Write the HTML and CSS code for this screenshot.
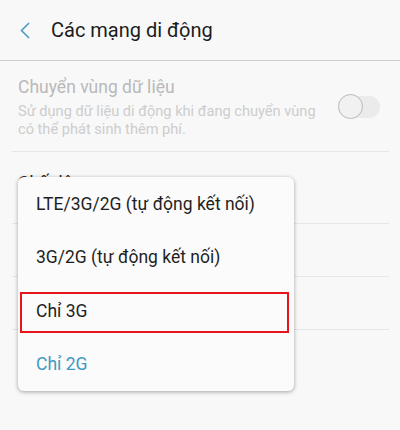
FILE: index.html
```html
<!DOCTYPE html>
<html lang="vi">
<head>
    <meta charset="UTF-8">
    <title>Các mạng di động</title>
    <link rel="stylesheet" href="styles.css">
</head>
<body>

<header class="topbar">
    <svg class="back" width="10" height="17" viewBox="0 0 10 17">
        <path d="M9 1 L1.5 8.5 L9 16" fill="none" stroke="#4a9cc4" stroke-width="1.6"/>
    </svg>
    <h1>Các mạng di động</h1>
</header>

<div class="list">
    <div class="row disabled">
        <div class="row-text">
            <div class="row-title">Chuyển vùng dữ liệu</div>
            <div class="row-sub">Sử dụng dữ liệu di động khi đang chuyển vùng có thể phát sinh thêm phí.</div>
        </div>
        <div class="switch"><span class="thumb"></span></div>
    </div>
    <div class="row tall">
        <div class="row-title">Chế độ mạng</div>
    </div>
    <div class="row short"></div>
    <div class="row short"></div>

    <div class="popup">
        <div class="option">LTE/3G/2G (tự động kết nối)</div>
        <div class="option">3G/2G (tự động kết nối)</div>
        <div class="option marked">Chỉ 3G</div>
        <div class="option active">Chỉ 2G</div>
    </div>
</div>

</body>
</html>
```

FILE: styles.css
```css
html, body {
    min-height: 430px;
}
body {
    margin: 0;
    background: #f8f8f8;
    font-family: Roboto, "Noto Sans", sans-serif;
    color: #222;
}
.topbar {
    height: 61px;
    display: flex;
    align-items: center;
    border-bottom: 1px solid #cfcfcf;
    box-sizing: border-box;
    padding-left: 20px;
}
.topbar .back {
    margin-right: 21px;
}
.topbar h1 {
    margin: 0;
    font-size: 20px;
    font-weight: 400;
    color: #1c1c1c;
}
.list {
    position: relative;
    min-height: 369px;
    padding: 0 11px 0 12px;
}
.row {
    display: flex;
    align-items: center;
    border-bottom: 1px solid #e6e6e6;
    padding: 14px 0 13px 6px;
}
.row-text {
    flex: 1;
}
.row-title {
    font-size: 17.5px;
    line-height: 24px;
}
.row-sub {
    font-size: 14.6px;
    line-height: 18px;
    margin-top: 3px;
    padding-right: 16px;
}
.disabled .row-title {
    color: #b9b9b9;
}
.disabled .row-sub {
    color: #cdcdcd;
}
.row.tall {
    display: block;
    height: 72px;
    padding: 19px 0 0 6px;
    box-sizing: border-box;
}
.row.short {
    height: 52px;
    padding: 0;
}
.switch {
    position: relative;
    width: 42px;
    height: 22px;
    border-radius: 11px;
    background: #ebebeb;
    margin-right: 9px;
}
.switch .thumb {
    position: absolute;
    left: 0;
    top: -2px;
    width: 23px;
    height: 23px;
    border-radius: 50%;
    background: #f1f1f1;
    border: 1px solid #b9b9b9;
}
.popup {
    position: absolute;
    left: 18px;
    top: 116px;
    width: 276px;
    background: #fbfbfb;
    border-radius: 6px;
    box-shadow: 0 1px 4px rgba(0, 0, 0, 0.35);
}
.option {
    position: relative;
    height: 53.5px;
    display: flex;
    align-items: center;
    padding-left: 18px;
    font-size: 17.5px;
    color: #1f1f1f;
}
.option.active {
    color: #3d9ac2;
}
.option.marked::after {
    content: "";
    position: absolute;
    left: 2px;
    right: 5px;
    top: 8px;
    bottom: 5px;
    border: 2px solid #e8141c;
}
```
